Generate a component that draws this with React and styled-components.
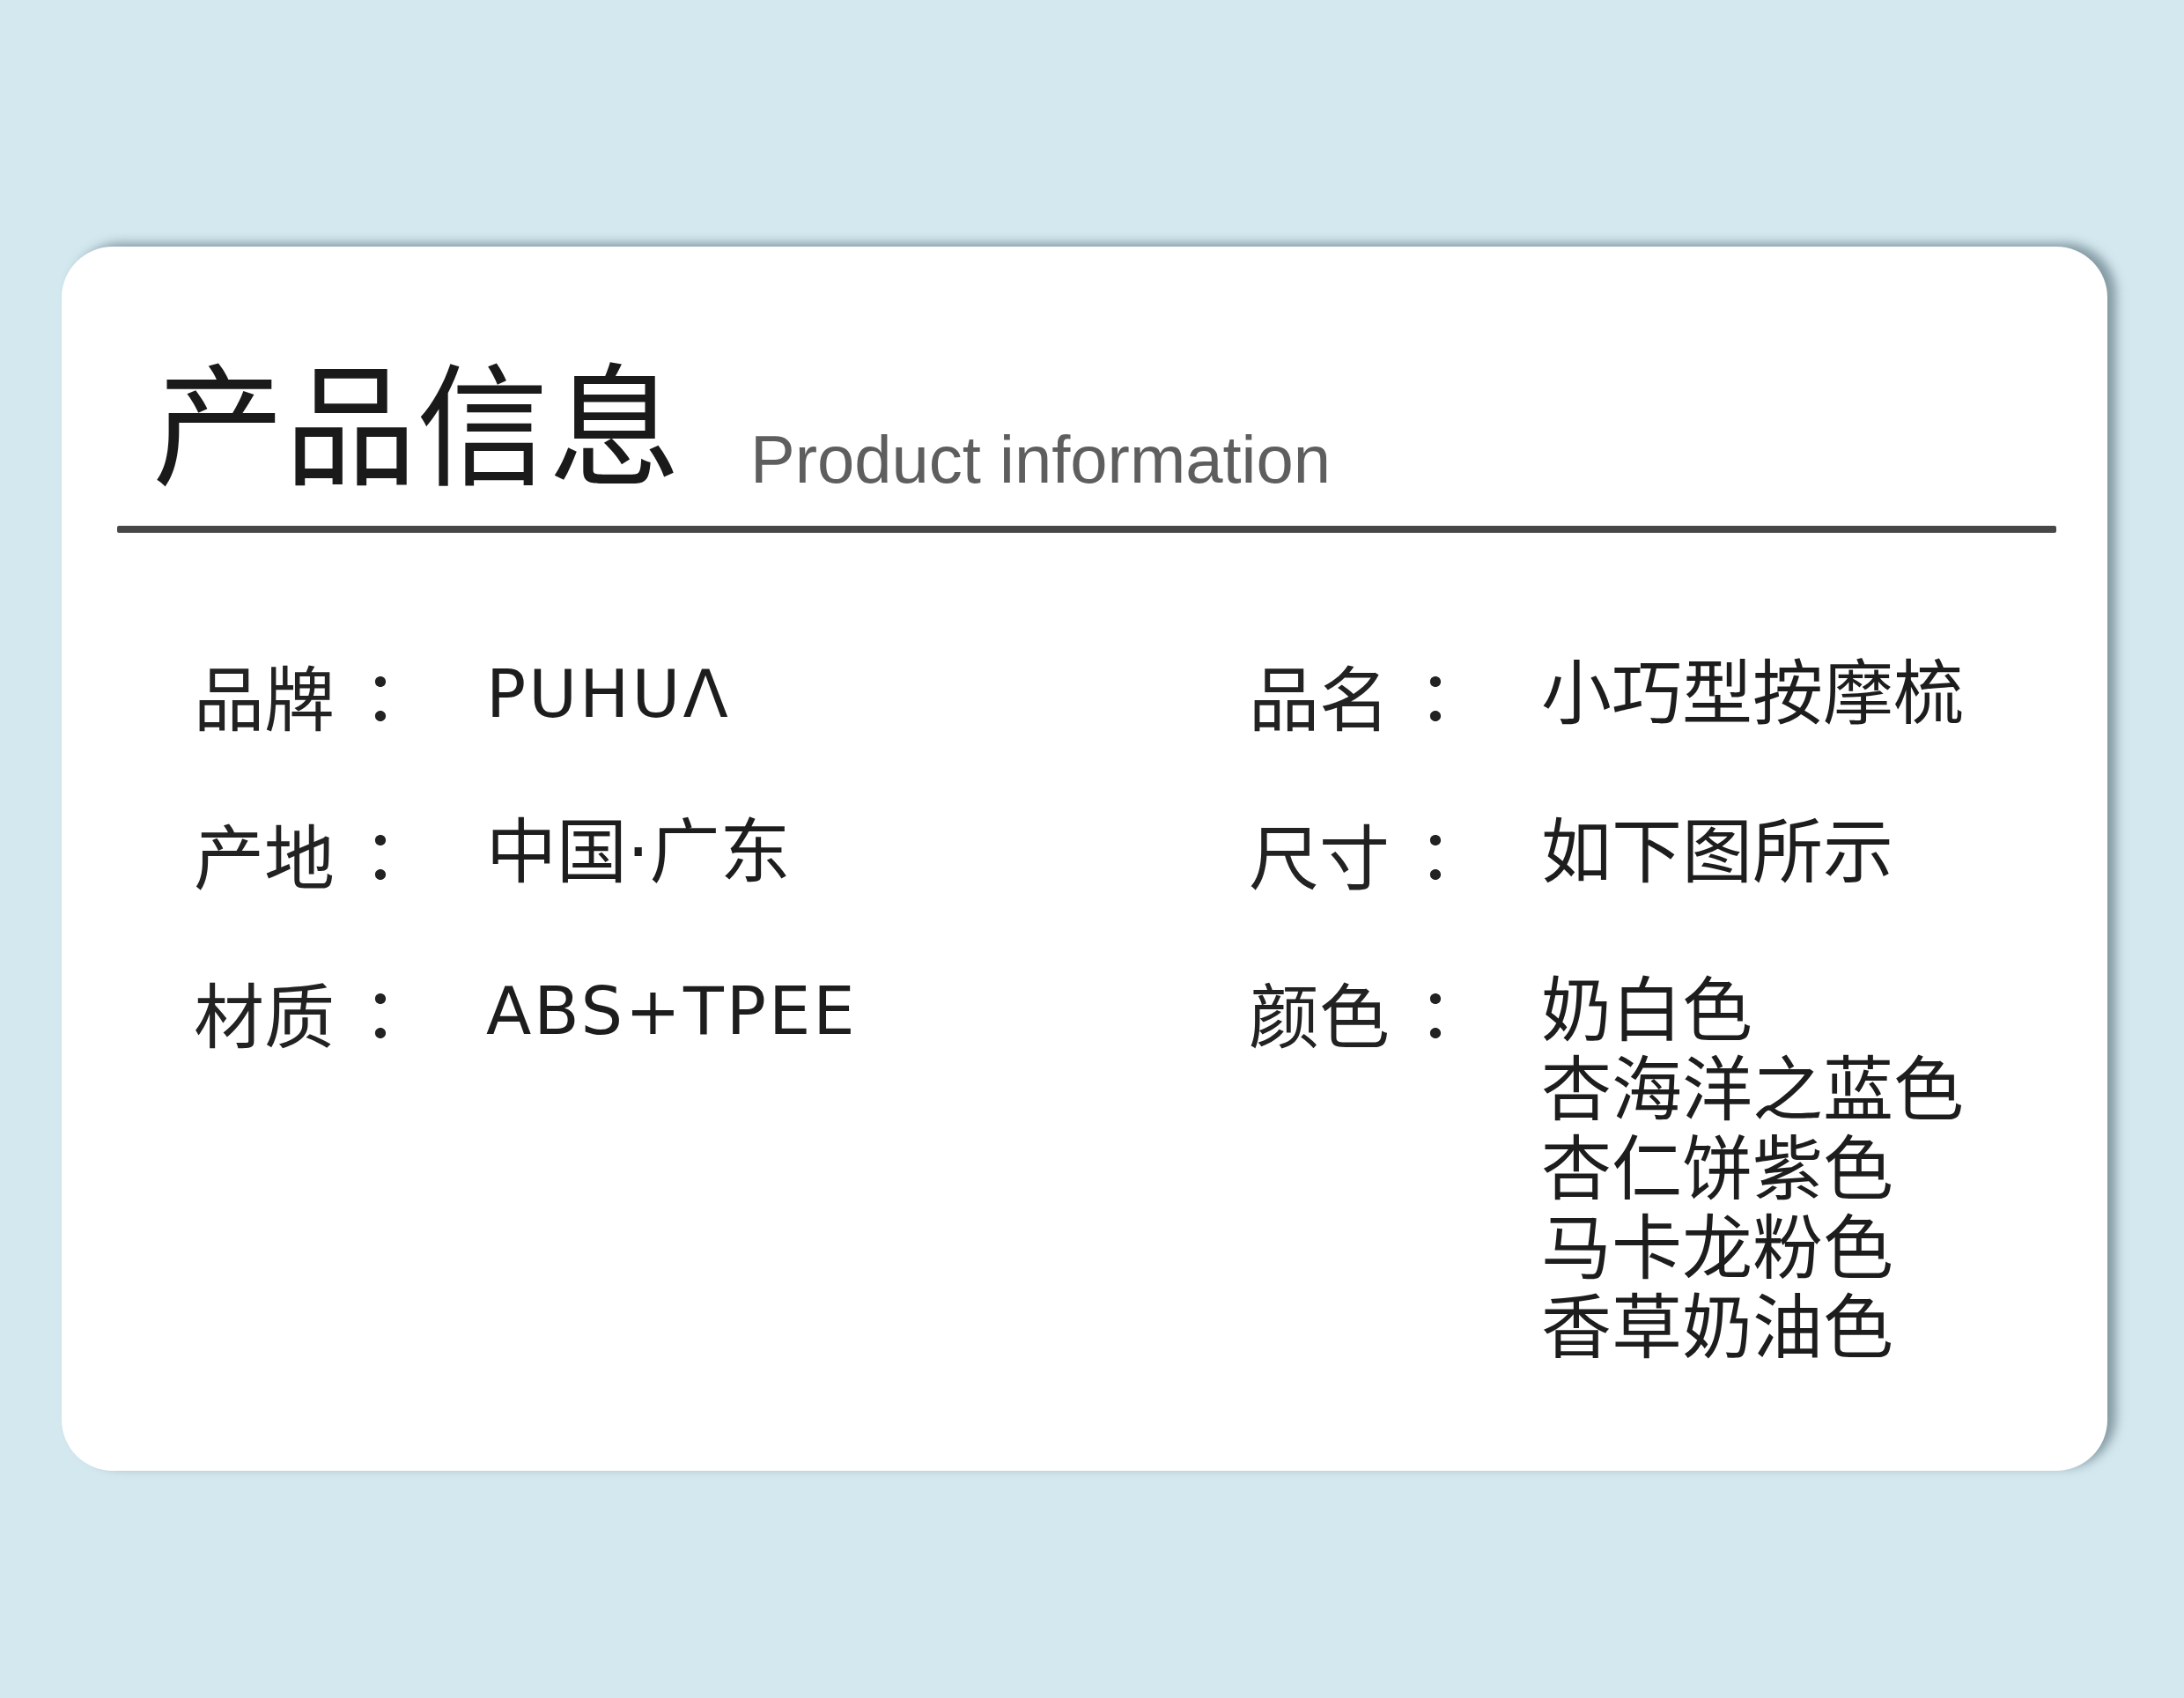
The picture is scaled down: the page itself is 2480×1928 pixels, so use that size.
import styled, { createGlobalStyle } from "styled-components";

const GlobalStyle = createGlobalStyle`
    html, body {
        margin: 0;
        padding: 0;
        background: #d4e8ef;
    }
    body {
        font-family: "Noto Sans CJK SC", "Noto Sans", sans-serif;
        color: #1d1d1d;
    }
`;

const Page = styled.div`
    width: 2480px;
    height: 1928px;
    box-sizing: border-box;
    padding: 280px 0 0 70px;
    background: #d4e8ef;
`;

const Card = styled.div`
    width: 2323px;
    height: 1390px;
    box-sizing: border-box;
    padding: 0 58px 0 63px;
    background: #fff;
    border-radius: 58px;
    box-shadow: 10px -4px 12px rgba(70, 92, 104, 0.55);
`;

const Header = styled.div`
    display: flex;
    align-items: baseline;
    gap: 79px;
    padding: 119px 0 0 40px;
    height: 317px;
    box-sizing: border-box;
`;

const Title = styled.h1`
    margin: 0;
    font-family: "Noto Sans CJK SC", sans-serif;
    font-weight: 400;
    font-size: 150px;
    line-height: 1;
    color: #1a1a1a;
`;

const Subtitle = styled.span`
    font-family: "Liberation Sans", Arial, sans-serif;
    font-size: 76px;
    line-height: 1;
    color: #5e5e5e;
    transform: translateY(9px);
`;

const Rule = styled.div`
    height: 8px;
    background: #474747;
    border-radius: 2px;
`;

const Fields = styled.div`
    display: grid;
    grid-template-columns: 1198px 1fr;
    row-gap: 90px;
    padding: 138px 0 0 87px;
`;

const Field = styled.div`
    display: flex;
    align-items: flex-start;
    font-size: 80px;
    line-height: 90px;
`;

const Label = styled.div`
    width: 160px;
    font-family: "Noto Sans CJK SC", sans-serif;
    color: #222;
`;

const Colon = styled.span`
    width: 172px;
    padding-left: 12px;
    box-sizing: border-box;
    font-family: "Noto Sans CJK TC", sans-serif;
    color: #222;
`;

const Value = styled.div`
    display: flex;
    flex-direction: column;
    font-family: "DejaVu Sans", "Noto Sans CJK SC", sans-serif;
    font-size: ${({ $latin }) => ($latin ? "75px" : "80px")};
    letter-spacing: ${({ $latin }) => ($latin ? "3px" : "0")};
    color: #1d1d1d;
`;

const fields = [
    { label: "品牌", value: ["PUHUΛ"], latin: true },
    { label: "品名", value: ["小巧型按摩梳"] },
    { label: "产地", value: ["中国·广东"] },
    { label: "尺寸", value: ["如下图所示"] },
    { label: "材质", value: ["ABS+TPEE"], latin: true },
    { label: "颜色", value: ["奶白色", "杏海洋之蓝色", "杏仁饼紫色", "马卡龙粉色", "香草奶油色"] },
];

export default function App() {
    return (
        <>
            <GlobalStyle />
            <Page>
                <Card>
                    <Header>
                        <Title>产品信息</Title>
                        <Subtitle>Product information</Subtitle>
                    </Header>
                    <Rule />
                    <Fields>
                        {fields.map((field) => (
                            <Field key={field.label}>
                                <Label>{field.label}</Label>
                                <Colon>：</Colon>
                                <Value $latin={field.latin}>
                                    {field.value.map((line) => (
                                        <span key={line}>{line}</span>
                                    ))}
                                </Value>
                            </Field>
                        ))}
                    </Fields>
                </Card>
            </Page>
        </>
    );
}
